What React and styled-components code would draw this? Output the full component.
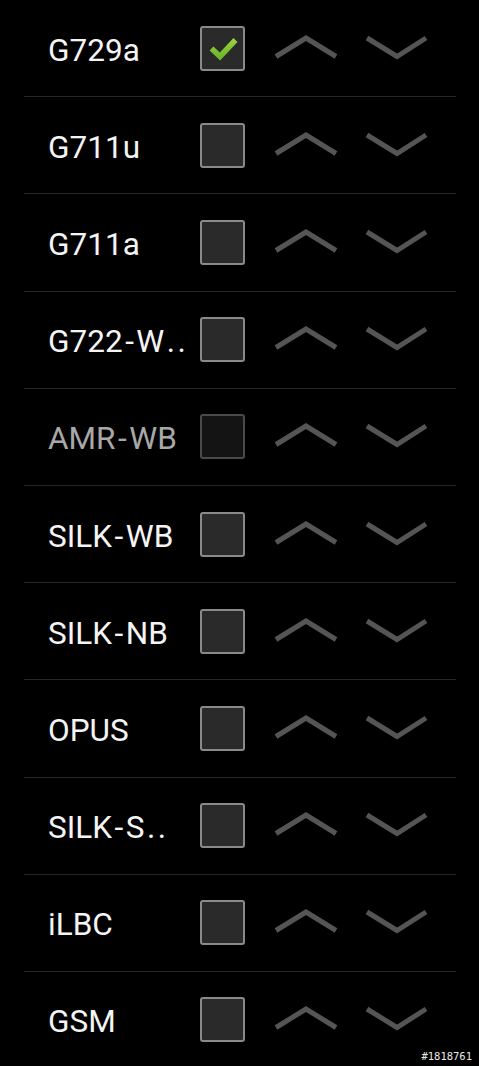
import React from 'react'
import styled, { createGlobalStyle } from 'styled-components'

const GlobalStyle = createGlobalStyle`
  html, body {
    margin: 0;
    padding: 0;
    background: #000;
  }
  body {
    font-family: Roboto, "Noto Sans", sans-serif;
  }
`

const Screen = styled.div`
  position: relative;
  width: 479px;
  height: 1066px;
  overflow: hidden;
  background: #000;
`

const List = styled.div`
  padding: 0 23px 0 24px;
`

const Row = styled.div`
  display: flex;
  align-items: center;
  height: 96.2px;
  padding-left: 24px;
  border-bottom: 1px solid #262626;
`

const Name = styled.div`
  width: 152px;
  flex-shrink: 0;
  font-size: 31.5px;
  color: ${(p) => (p.$disabled ? '#a8a8a8' : '#f4f4f4')};
  white-space: nowrap;
  overflow: hidden;
  padding-top: 4px;
`

const Hyphen = styled.span`
  margin: 0 2.5px;
`

const Dot = styled.span`
  margin-left: 2.5px;
`

const CheckWrap = styled.div`
  position: relative;
  width: 45px;
  height: 45px;
  flex-shrink: 0;
`

const Box = styled.div`
  width: 45px;
  height: 45px;
  box-sizing: border-box;
  border: 2px solid ${(p) => (p.$disabled ? '#4a4a4a' : '#8a8a8a')};
  border-radius: 3px;
  background: ${(p) => (p.$disabled ? '#141414' : '#2a2a2a')};
`

const CheckMark = styled.svg`
  position: absolute;
  top: 0;
  left: 0;
  width: 45px;
  height: 45px;
`

const Arrow = styled.svg`
  width: 62px;
  height: 45px;
  flex-shrink: 0;
  overflow: visible;
  margin-left: ${(p) => p.$gap}px;
`

const Watermark = styled.div`
  position: absolute;
  right: 7px;
  bottom: 4px;
  font-family: "DejaVu Sans Mono", "Liberation Mono", monospace;
  font-size: 10.5px;
  color: #e8e8e8;
`

const codecs = [
  { name: 'G729a', checked: true },
  { name: 'G711u' },
  { name: 'G711a' },
  { name: 'G722-W..' },
  { name: 'AMR-WB', disabled: true },
  { name: 'SILK-WB' },
  { name: 'SILK-NB' },
  { name: 'OPUS' },
  { name: 'SILK-S..' },
  { name: 'iLBC' },
  { name: 'GSM' },
]

// the device font sets hyphens and ellipsis dots looser than Roboto does
const label = (text) =>
  text.split('').map((ch, i) => {
    if (ch === '-') return <Hyphen key={i}>-</Hyphen>
    if (ch === '.') return <Dot key={i}>.</Dot>
    return ch
  })

const Check = () => (
  <CheckMark viewBox="0 0 45 45">
    <defs>
      <linearGradient id="chk" x1="0" y1="0" x2="0" y2="1">
        <stop offset="0" stopColor="#9ad23f" />
        <stop offset="1" stopColor="#6fb52c" />
      </linearGradient>
    </defs>
    <polyline
      points="11.5,22.5 20,30.5 35.5,14"
      fill="none"
      stroke="url(#chk)"
      strokeWidth="5.5"
    />
  </CheckMark>
)

const Up = () => (
  <Arrow viewBox="0 0 62 45" $gap={30}>
    <polyline points="1,30.5 31,12 61,30.5" fill="none" stroke="#555" strokeWidth="5" />
  </Arrow>
)

const Down = () => (
  <Arrow viewBox="0 0 62 45" $gap={28}>
    <polyline points="2,12 32,30.5 61,12" fill="none" stroke="#555" strokeWidth="5" />
  </Arrow>
)

export default function App() {
  return (
    <Screen>
      <GlobalStyle />
      <List>
        {codecs.map((c) => (
          <Row key={c.name}>
            <Name $disabled={c.disabled}>{label(c.name)}</Name>
            <CheckWrap>
              <Box $disabled={c.disabled} />
              {c.checked && <Check />}
            </CheckWrap>
            <Up />
            <Down />
          </Row>
        ))}
      </List>
      <Watermark>#1818761</Watermark>
    </Screen>
  )
}
